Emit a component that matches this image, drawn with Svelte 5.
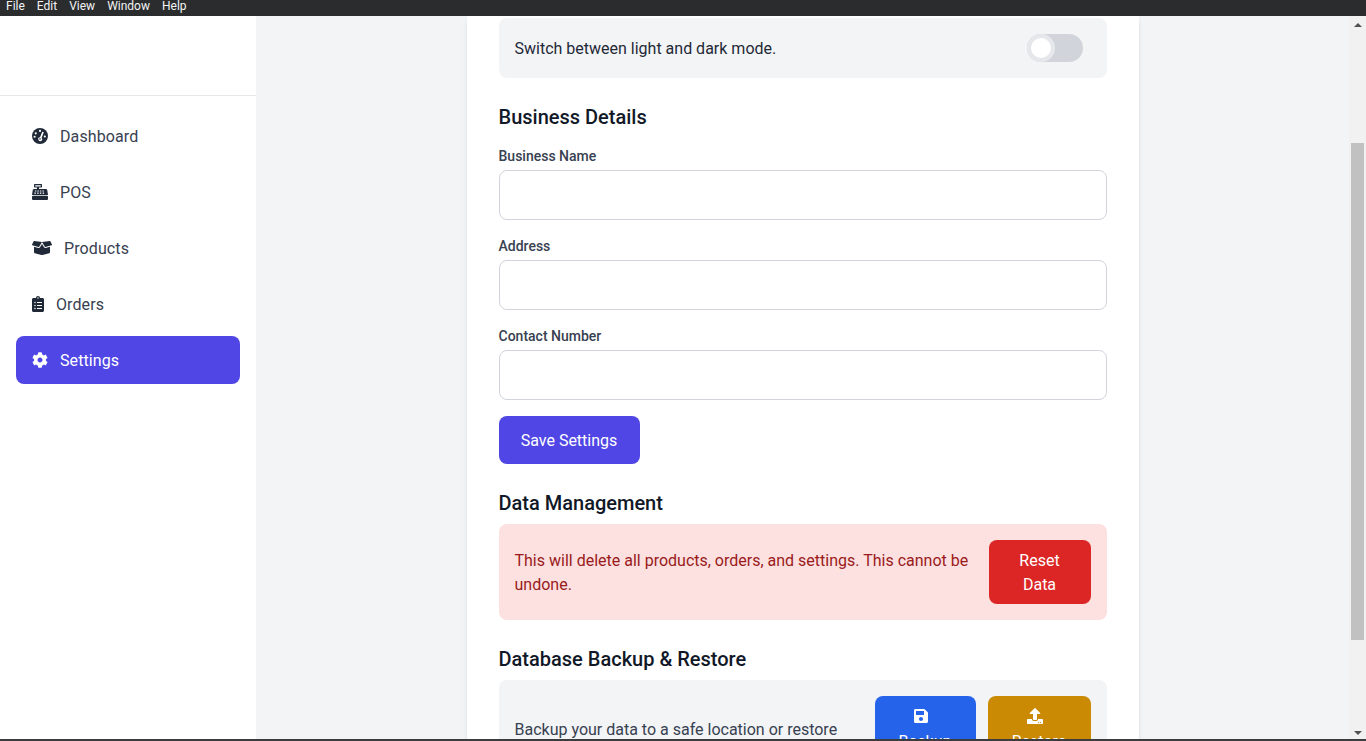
<script>
  const menu = ["File", "Edit", "View", "Window", "Help"];
  const cog = "M487.4 315.7l-42.6-24.6c4.3-23.2 4.3-47 0-70.2l42.6-24.6c4.9-2.8 7.1-8.6 5.5-14-11.1-35.6-30-67.8-54.7-94.6-3.8-4.1-10-5.1-14.8-2.3L380.8 110c-17.9-15.4-38.5-27.3-60.8-35.1V25.8c0-5.6-3.9-10.5-9.4-11.7-36.7-8.2-74.3-7.8-109.2 0-5.5 1.2-9.4 6.1-9.4 11.7V75c-22.2 7.9-42.8 19.8-60.8 35.1L88.7 85.5c-4.9-2.8-11-1.9-14.8 2.3-24.7 26.7-43.6 58.9-54.7 94.6-1.7 5.4.6 11.2 5.5 14L67.3 221c-4.3 23.2-4.3 47 0 70.2l-42.6 24.6c-4.9 2.8-7.1 8.6-5.5 14 11.1 35.6 30 67.8 54.7 94.6 3.8 4.1 10 5.1 14.8 2.3l42.6-24.6c17.9 15.4 38.5 27.3 60.8 35.1v49.2c0 5.6 3.9 10.5 9.4 11.7 36.7 8.2 74.3 7.8 109.2 0 5.5-1.2 9.4-6.1 9.4-11.7v-49.2c22.2-7.9 42.8-19.8 60.8-35.1l42.6 24.6c4.9 2.8 11 1.9 14.8-2.3 24.7-26.7 43.6-58.9 54.7-94.6 1.5-5.5-.7-11.3-5.6-14.1zM256 336c-44.1 0-80-35.9-80-80s35.9-80 80-80 80 35.9 80 80-35.9 80-80 80z";
  const boxOpen = "M425.7 256c-16.9 0-32.8-9-41.4-23.4L320 126l-64.2 106.6c-8.7 14.5-24.6 23.5-41.5 23.5-4.5 0-9-.6-13.3-1.9L64 215v178c0 14.7 10 27.5 24.2 31.1l216.2 54.1c10.2 2.5 20.9 2.5 31 0L551.8 424c14.2-3.6 24.2-16.4 24.2-31V215l-137 39.1c-4.3 1.3-8.8 1.9-13.3 1.9zm212.6-112.2L586.8 41c-3.1-6.2-9.8-9.8-16.7-8.9L320 64l91.7 152.1c3.8 6.3 11.4 9.3 18.5 7.3l197.9-56.5c9.9-2.9 14.7-13.9 10.2-23.1zM53.2 41L1.7 143.8c-4.6 9.2.3 20.2 10.1 23l197.9 56.5c7.1 2 14.7-1 18.5-7.3L320 64 69.8 32.1c-6.9-.8-13.5 2.7-16.6 8.9z";
  const clipboard = "M336 64h-80c0-35.3-28.7-64-64-64s-64 28.7-64 64H48C21.5 64 0 85.5 0 112v352c0 26.5 21.5 48 48 48h288c26.5 0 48-21.5 48-48V112c0-26.5-21.5-48-48-48zM96 424c-13.3 0-24-10.7-24-24s10.7-24 24-24 24 10.7 24 24-10.7 24-24 24zm0-96c-13.3 0-24-10.7-24-24s10.7-24 24-24 24 10.7 24 24-10.7 24-24 24zm0-96c-13.3 0-24-10.7-24-24s10.7-24 24-24 24 10.7 24 24-10.7 24-24 24zm96-192c13.3 0 24 10.7 24 24s-10.7 24-24 24-24-10.7-24-24 10.7-24 24-24zm128 368c0 4.4-3.6 8-8 8H168c-4.4 0-8-3.6-8-8v-16c0-4.4 3.6-8 8-8h144c4.4 0 8 3.6 8 8v16zm0-96c0 4.4-3.6 8-8 8H168c-4.4 0-8-3.6-8-8v-16c0-4.4 3.6-8 8-8h144c4.4 0 8 3.6 8 8v16zm0-96c0 4.4-3.6 8-8 8H168c-4.4 0-8-3.6-8-8v-16c0-4.4 3.6-8 8-8h144c4.4 0 8 3.6 8 8v16z";
  const save = "M433.941 129.941l-83.882-83.882A48 48 0 0 0 316.118 32H48C21.49 32 0 53.49 0 80v352c0 26.51 21.49 48 48 48h352c26.51 0 48-21.49 48-48V163.882a48 48 0 0 0-14.059-33.941zM224 416c-35.346 0-64-28.654-64-64 0-35.346 28.654-64 64-64s64 28.654 64 64c0 35.346-28.654 64-64 64zm96-304.52V212c0 6.627-5.373 12-12 12H76c-6.627 0-12-5.373-12-12V108c0-6.627 5.373-12 12-12h228.52c3.183 0 6.235 1.264 8.485 3.515l3.48 3.48A11.996 11.996 0 0 1 320 111.48z";
  const upload = "M296 384h-80c-13.3 0-24-10.7-24-24V192h-87.7c-17.8 0-26.7-21.5-14.1-34.1L242.3 5.7c7.5-7.5 19.8-7.5 27.3 0l152.2 152.2c12.6 12.6 3.7 34.1-14.1 34.1H320v168c0 13.3-10.7 24-24 24zm216-8v112c0 13.3-10.7 24-24 24H24c-13.3 0-24-10.7-24-24V376c0-13.3 10.7-24 24-24h136v8c0 30.9 25.1 56 56 56h80c30.9 0 56-25.1 56-56v-8h136c13.3 0 24 10.7 24 24zm-124 88c0-11-9-20-20-20s-20 9-20 20 9 20 20 20 20-9 20-20zm64 0c0-11-9-20-20-20s-20 9-20 20 9 20 20 20 20-9 20-20z";

  const fields = ["Business Name", "Address", "Contact Number"];
</script>

<div class="app">
  <header class="menubar">
    {#each menu as item}
      <span>{item}</span>
    {/each}
  </header>

  <div class="body">
    <aside class="sidebar">
      <div class="brand"></div>
      <nav>
        <a href="#dashboard" class="nav-item">
          <svg class="icon" viewBox="0 0 512 512" width="16" height="16" fill="currentColor">
            <circle cx="256" cy="256" r="256" />
            <g fill="#fff">
              <circle cx="256" cy="92" r="34" />
              <circle cx="120" cy="170" r="34" />
              <circle cx="84" cy="280" r="34" />
              <circle cx="410" cy="270" r="34" />
              <path d="M330 118l48 20-72 178a62 62 0 1 1-50-18z" />
            </g>
            <circle cx="256" cy="352" r="26" />
          </svg>
          <span>Dashboard</span>
        </a>
        <a href="#pos" class="nav-item">
          <svg class="icon" viewBox="0 0 512 512" width="16" height="16" fill="currentColor">
            <path fill-rule="evenodd" d="M88 0h208a24 24 0 0 1 24 24v64a24 24 0 0 1-24 24h-72v48h-64v-48H88a24 24 0 0 1-24-24V24A24 24 0 0 1 88 0zm16 36v40h176V36z" />
            <path d="M72 160h368c26 0 46 18 50 44l22 148H0l22-148c4-26 24-44 50-44z" />
            <rect y="376" width="512" height="136" rx="36" />
            <g fill="#fff">
              <rect x="92" y="208" width="48" height="34" rx="6" />
              <rect x="172" y="208" width="48" height="34" rx="6" />
              <rect x="252" y="208" width="48" height="34" rx="6" />
              <rect x="332" y="208" width="48" height="34" rx="6" />
              <rect x="76" y="274" width="48" height="34" rx="6" />
              <rect x="164" y="274" width="48" height="34" rx="6" />
              <rect x="252" y="274" width="48" height="34" rx="6" />
              <rect x="340" y="274" width="48" height="34" rx="6" />
            </g>
          </svg>
          <span>POS</span>
        </a>
        <a href="#products" class="nav-item">
          <svg class="icon" viewBox="0 0 640 512" width="20" height="16" fill="currentColor"><path d={boxOpen} /></svg>
          <span>Products</span>
        </a>
        <a href="#orders" class="nav-item">
          <svg class="icon" viewBox="0 0 384 512" width="12" height="16" fill="currentColor"><path d={clipboard} /></svg>
          <span>Orders</span>
        </a>
        <a href="#settings" class="nav-item active">
          <svg class="icon" viewBox="0 0 512 512" width="16" height="16" fill="currentColor"><path d={cog} /></svg>
          <span>Settings</span>
        </a>
      </nav>
    </aside>

    <main class="content">
      <div class="card">
        <div class="panel theme">
          <p>Switch between light and dark mode.</p>
          <div class="toggle"><div class="knob"></div></div>
        </div>

        <h2 class="details-title">Business Details</h2>
        {#each fields as field}
          <div class="field">
            <label for={field}>{field}</label>
            <input id={field} type="text" />
          </div>
        {/each}
        <button class="save">Save Settings</button>

        <h2 class="data-title">Data Management</h2>
        <div class="panel danger">
          <p>This will delete all products, orders, and settings. This cannot be undone.</p>
          <button class="reset">Reset Data</button>
        </div>

        <h2 class="backup-title">Database Backup &amp; Restore</h2>
        <div class="panel backup">
          <p>Backup your data to a safe location or restore from a previous backup file.</p>
          <div class="backup-actions">
            <button class="backup-btn">
              <svg viewBox="0 0 448 512" width="14" height="16" fill="currentColor"><path d={save} /></svg>
              <span>Backup</span>
            </button>
            <button class="restore-btn">
              <svg viewBox="0 0 512 512" width="16" height="16" fill="currentColor"><path d={upload} /></svg>
              <span>Restore</span>
            </button>
          </div>
        </div>
      </div>
    </main>

    <div class="scrollbar">
      <div class="arrow up"></div>
      <div class="thumb"></div>
      <div class="arrow down"></div>
    </div>
  </div>

  <div class="taskbar"></div>
</div>

<style>
  :global(body) {
    margin: 0;
    overflow: hidden;
    font-family: Roboto, "Noto Sans", sans-serif;
  }

  .app {
    height: 741px;
    display: flex;
    flex-direction: column;
    background: #f3f4f6;
    color: #1f2937;
  }

  .menubar {
    height: 16px;
    flex: none;
    background: #2b2c2e;
    color: #f3f3f3;
    display: flex;
    gap: 12px;
    padding-left: 6px;
    font-size: 12px;
    line-height: 13px;
  }

  .body {
    flex: 1;
    min-height: 0;
    display: flex;
    overflow: hidden;
  }

  .taskbar {
    height: 2px;
    flex: none;
    background: #3b3c3e;
  }

  .sidebar {
    width: 256px;
    flex: none;
    background: #fff;
  }

  .brand {
    height: 79px;
    border-bottom: 1px solid #e5e7eb;
  }

  nav {
    padding: 16px;
    display: flex;
    flex-direction: column;
    gap: 8px;
  }

  .nav-item {
    height: 48px;
    box-sizing: border-box;
    display: flex;
    align-items: center;
    gap: 12px;
    padding: 0 16px;
    border-radius: 8px;
    color: #374151;
    text-decoration: none;
    font-size: 16px;
    letter-spacing: 0.1px;
  }

  .nav-item .icon {
    color: #1f2937;
    flex: none;
  }

  .nav-item.active,
  .nav-item.active .icon {
    background: #4f46e5;
    color: #fff;
  }

  .content {
    flex: 1;
    min-width: 0;
    display: flex;
    justify-content: center;
  }

  .card {
    width: 672px;
    box-sizing: border-box;
    flex: none;
    align-self: flex-start;
    background: #fff;
    padding: 2px 32px 32px;
    box-shadow: 0 4px 6px -1px rgba(0, 0, 0, 0.1), 0 2px 4px -2px rgba(0, 0, 0, 0.1);
  }

  .panel {
    display: flex;
    align-items: center;
    justify-content: space-between;
    gap: 16px;
    padding: 16px;
    border-radius: 8px;
    background: #f3f4f6;
  }

  .panel p {
    margin: 2px 0 0;
    font-size: 16px;
    line-height: 24px;
  }

  .theme {
    padding-right: 24px;
  }

  .toggle {
    width: 56px;
    height: 28px;
    flex: none;
    border-radius: 14px;
    background: #d1d5db;
  }

  .knob {
    width: 20px;
    height: 20px;
    border: 4px solid #e5e7eb;
    border-radius: 50%;
    background: #fff;
  }

  h2 {
    margin: 0;
    color: #111827;
    font-size: 20px;
    line-height: 28px;
    font-weight: 500;
  }

  .details-title {
    margin-top: 25px;
    margin-bottom: 15px;
  }

  .field {
    margin-bottom: 16px;
  }

  label {
    display: block;
    margin-bottom: 4px;
    color: #374151;
    font-size: 14px;
    line-height: 20px;
    font-weight: 500;
  }

  input {
    display: block;
    width: 100%;
    height: 50px;
    box-sizing: border-box;
    border: 1px solid #d1d5db;
    border-radius: 8px;
    background: #fff;
  }

  button {
    border: none;
    color: #fff;
    font-family: inherit;
    font-size: 16px;
    line-height: 24px;
    border-radius: 8px;
  }

  .save {
    display: block;
    width: 141px;
    height: 48px;
    padding: 2px 0 0;
    background: #4f46e5;
  }

  .data-title {
    margin-top: 25px;
    margin-bottom: 7px;
  }

  .danger {
    background: #fde0e0;
  }

  .danger p {
    color: #991b1b;
  }

  .reset {
    width: 102px;
    height: 64px;
    flex: none;
    padding: 9px 16px 7px;
    background: #dc2626;
  }

  .backup-title {
    margin-top: 25px;
    margin-bottom: 7px;
  }

  .backup p {
    color: #374151;
  }

  .backup-actions {
    display: flex;
    gap: 12px;
    flex: none;
  }

  .backup-actions button {
    display: flex;
    flex-direction: column;
    align-items: center;
    gap: 6px;
    padding: 12px 24px;
    height: 90px;
  }

  .backup-actions svg {
    margin-right: 8px;
  }

  .backup-btn {
    width: 101px;
    background: #2563eb;
  }

  .restore-btn {
    width: 103px;
    background: #ca8a04;
  }

  .scrollbar {
    width: 17px;
    flex: none;
    background: #f1f1f1;
    display: flex;
    flex-direction: column;
    align-items: center;
  }

  .arrow {
    width: 0;
    height: 0;
    border-left: 4px solid transparent;
    border-right: 4px solid transparent;
  }

  .arrow.up {
    margin-top: 7px;
    border-bottom: 4px solid #505050;
  }

  .arrow.down {
    margin-top: 91px;
    border-top: 4px solid #505050;
  }

  .thumb {
    width: 13px;
    height: 497px;
    margin-top: 116px;
    background: #c1c1c1;
  }
</style>
